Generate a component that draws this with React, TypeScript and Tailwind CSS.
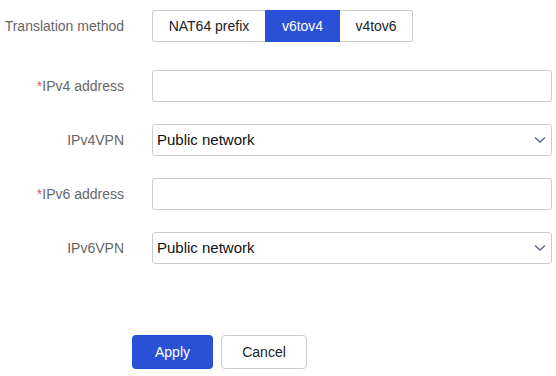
import React from "react";

const font = { fontFamily: '"Liberation Sans", Arial, sans-serif' };

function Label({ text, req }: { text: string; req?: boolean }) {
  return (
    <div className="w-[124px] shrink-0 text-right text-[14px] text-[#666666] pr-0">
      {req && <span className="text-[#e0556b]">*</span>}
      {text}
    </div>
  );
}

function Select() {
  return (
    <div className="flex items-center justify-between w-[400px] h-[32px] border border-[#cccccc] rounded-[3px] pl-[4px] pr-[5px] bg-white">
      <span className="text-[15px] text-[#111111]">Public network</span>
      <svg width="12" height="8" viewBox="0 0 12 8" fill="none">
        <path d="M1 1.5 L6 6 L11 1.5" stroke="#5a6a86" strokeWidth="1.4" />
      </svg>
    </div>
  );
}

function Input() {
  return <div className="w-[400px] h-[32px] border border-[#cccccc] rounded-[3px] bg-white" />;
}

export default function App() {
  return (
    <div style={font} className="w-[556px] h-[376px] bg-white relative">
      <div className="flex flex-col pt-[10px]">
        <div className="flex items-center gap-[28px] h-[32px]">
          <Label text="Translation method" />
          <div className="flex h-[32px] text-[14px]">
            <div className="w-[113px] flex items-center justify-center border border-[#cccccc] border-r-0 rounded-l-[3px] text-[#222222]">
              NAT64 prefix
            </div>
            <div className="w-[75px] flex items-center justify-center bg-[#2b50d8] text-white">
              v6tov4
            </div>
            <div className="w-[73px] flex items-center justify-center border border-[#cccccc] border-l-0 rounded-r-[3px] text-[#222222]">
              v4tov6
            </div>
          </div>
        </div>
        <div className="flex flex-col gap-[22px] mt-[28px]">
          <div className="flex items-center gap-[28px]">
            <Label text="IPv4 address" req />
            <Input />
          </div>
          <div className="flex items-center gap-[28px]">
            <Label text="IPv4VPN" />
            <Select />
          </div>
          <div className="flex items-center gap-[28px]">
            <Label text="IPv6 address" req />
            <Input />
          </div>
          <div className="flex items-center gap-[28px]">
            <Label text="IPv6VPN" />
            <Select />
          </div>
        </div>
        <div className="flex gap-[8px] pl-[132px] mt-[71px]">
          <div className="w-[81px] h-[34px] flex items-center justify-center bg-[#2b50d8] text-white rounded-[4px] text-[14px]">
            Apply
          </div>
          <div className="w-[86px] h-[34px] flex items-center justify-center border border-[#cccccc] text-[#222222] rounded-[4px] text-[14px]">
            Cancel
          </div>
        </div>
      </div>
    </div>
  );
}
